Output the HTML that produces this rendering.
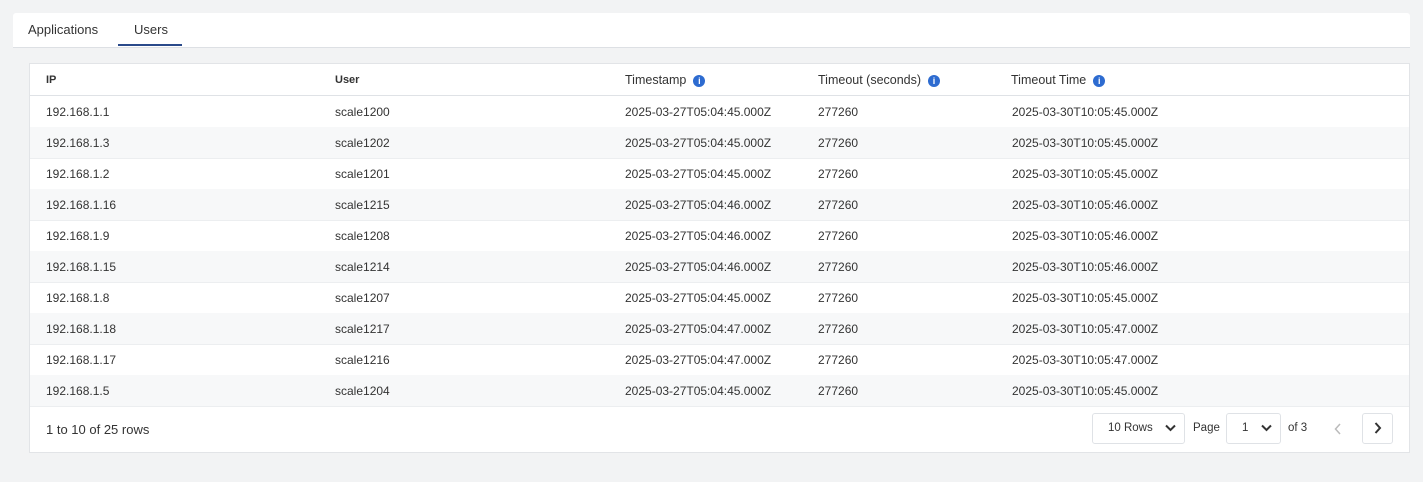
<!DOCTYPE html>
<html><head><style>
body{margin:0;width:1423px;height:482px;background:#f2f3f4;font-family:"Liberation Sans",sans-serif;color:#333;position:relative;overflow:hidden}
.tabs{position:absolute;left:13px;top:13px;width:1397px;height:34px;background:#fff;border-bottom:1px solid #dde0e4;border-radius:3px 3px 0 0}
.tab{position:absolute;top:9px;font-size:13px;color:#333}
.ul{position:absolute;left:105px;top:31px;width:64px;height:2px;background:#2a4a8a}
.card{position:absolute;left:29px;top:63px;width:1379px;height:388px;background:#fff;border:1px solid #e2e4e7}
.row{position:absolute;left:0;width:1379px;height:31px;border-bottom:1px solid #eceef0;font-size:12px}
.row span{position:absolute;top:9px}
.alt{background:#f7f8f9}
.hd{top:0;height:31px;border-bottom:1px solid #dfe2e6}
.hd span{top:10px;font-size:11px;font-weight:bold;color:#333}
.hd span.b{font-weight:normal;font-size:12.5px;top:9px}
.i{display:inline-block;width:12px;height:12px;border-radius:50%;background:#2d6bd0;color:#fff;font-size:9px;font-weight:bold;text-align:center;line-height:12px;margin-left:7px;vertical-align:0px;font-style:normal}
.foot{position:absolute;top:342px;left:0;width:1379px;height:46px;font-size:13px}
.box{position:absolute;top:7px;height:29px;border:1px solid #dfe2e6;border-radius:3px;background:#fff;font-size:11.5px}
</style></head><body>
<div class="tabs"><span class="tab" style="left:15px">Applications</span><span class="tab" style="left:121px">Users</span><div class="ul"></div></div>
<div class="card">
<div class="row hd"><span style="left:16px">IP</span><span style="left:305px">User</span><span class="b" style="left:595px">Timestamp<i class="i">i</i></span><span class="b" style="left:788px">Timeout (seconds)<i class="i">i</i></span><span class="b" style="left:981px">Timeout Time<i class="i">i</i></span></div>
<div class="row" style="top:32px"><span style="left:16px">192.168.1.1</span><span style="left:305px">scale1200</span><span style="left:595px">2025-03-27T05:04:45.000Z</span><span style="left:788px">277260</span><span style="left:982px">2025-03-30T10:05:45.000Z</span></div>
<div class="row alt" style="top:63px"><span style="left:16px">192.168.1.3</span><span style="left:305px">scale1202</span><span style="left:595px">2025-03-27T05:04:45.000Z</span><span style="left:788px">277260</span><span style="left:982px">2025-03-30T10:05:45.000Z</span></div>
<div class="row" style="top:94px"><span style="left:16px">192.168.1.2</span><span style="left:305px">scale1201</span><span style="left:595px">2025-03-27T05:04:45.000Z</span><span style="left:788px">277260</span><span style="left:982px">2025-03-30T10:05:45.000Z</span></div>
<div class="row alt" style="top:125px"><span style="left:16px">192.168.1.16</span><span style="left:305px">scale1215</span><span style="left:595px">2025-03-27T05:04:46.000Z</span><span style="left:788px">277260</span><span style="left:982px">2025-03-30T10:05:46.000Z</span></div>
<div class="row" style="top:156px"><span style="left:16px">192.168.1.9</span><span style="left:305px">scale1208</span><span style="left:595px">2025-03-27T05:04:46.000Z</span><span style="left:788px">277260</span><span style="left:982px">2025-03-30T10:05:46.000Z</span></div>
<div class="row alt" style="top:187px"><span style="left:16px">192.168.1.15</span><span style="left:305px">scale1214</span><span style="left:595px">2025-03-27T05:04:46.000Z</span><span style="left:788px">277260</span><span style="left:982px">2025-03-30T10:05:46.000Z</span></div>
<div class="row" style="top:218px"><span style="left:16px">192.168.1.8</span><span style="left:305px">scale1207</span><span style="left:595px">2025-03-27T05:04:45.000Z</span><span style="left:788px">277260</span><span style="left:982px">2025-03-30T10:05:45.000Z</span></div>
<div class="row alt" style="top:249px"><span style="left:16px">192.168.1.18</span><span style="left:305px">scale1217</span><span style="left:595px">2025-03-27T05:04:47.000Z</span><span style="left:788px">277260</span><span style="left:982px">2025-03-30T10:05:47.000Z</span></div>
<div class="row" style="top:280px"><span style="left:16px">192.168.1.17</span><span style="left:305px">scale1216</span><span style="left:595px">2025-03-27T05:04:47.000Z</span><span style="left:788px">277260</span><span style="left:982px">2025-03-30T10:05:47.000Z</span></div>
<div class="row alt" style="top:311px"><span style="left:16px">192.168.1.5</span><span style="left:305px">scale1204</span><span style="left:595px">2025-03-27T05:04:45.000Z</span><span style="left:788px">277260</span><span style="left:982px">2025-03-30T10:05:45.000Z</span></div>
<div class="foot">
<span style="position:absolute;left:16px;top:16px">1 to 10 of 25 rows</span>
<div class="box" style="left:1062px;width:91px"><span style="position:absolute;left:15px;top:8px">10 Rows</span><svg style="position:absolute;left:72px;top:10px" width="11" height="8"><path d="M1 1.5l4.5 4.5 4.5-4.5" stroke="#333" stroke-width="2" fill="none"/></svg></div>
<span style="position:absolute;left:1163px;top:16px;font-size:11.5px">Page</span>
<div class="box" style="left:1196px;width:53px"><span style="position:absolute;left:15px;top:8px">1</span><svg style="position:absolute;left:34px;top:10px" width="11" height="8"><path d="M1 1.5l4.5 4.5 4.5-4.5" stroke="#333" stroke-width="2" fill="none"/></svg></div>
<span style="position:absolute;left:1258px;top:16px;font-size:11.5px">of 3</span>
<svg style="position:absolute;left:1304px;top:17px" width="8" height="12"><path d="M6 1L1.5 6 6 11" stroke="#bbb" stroke-width="1.5" fill="none"/></svg>
<div class="box" style="left:1332px;width:29px"><svg style="position:absolute;left:11px;top:8px" width="8" height="12"><path d="M1.5 1L6 6 1.5 11" stroke="#333" stroke-width="2" fill="none"/></svg></div>
</div>
</div>
</body></html>
